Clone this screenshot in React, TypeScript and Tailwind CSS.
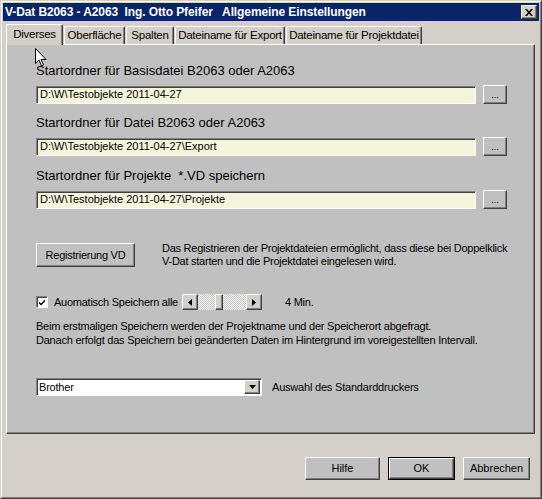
import React from "react";

const font = "font-['Liberation_Sans',Arial,sans-serif]";

// classic raised 3d button edge
const raised =
  "border border-t-white border-l-white border-r-[#404040] border-b-[#404040] shadow-[inset_-1px_-1px_0_#808080]";
const sunken =
  "border border-t-[#808080] border-l-[#808080] border-r-white border-b-white shadow-[inset_1px_1px_0_#404040]";

const PathRow = ({ value }: { value: string }) => (
  <div className="flex items-center gap-[7px]">
    <div className={`w-[440px] h-[18px] bg-[#f5f5dc] ${sunken} flex items-center pl-[3px] text-[11px] text-black whitespace-nowrap`}>
      {value}
    </div>
    <button className={`w-[24px] h-[19px] bg-[#c0c0c0] ${raised} flex items-end justify-center pb-[3px] text-[9px] leading-none text-black`}>
      ...
    </button>
  </div>
);

const Tab = ({ label, active, w }: { label: string; active?: boolean; w: string }) => (
  <div
    className={`${w} flex items-center justify-center whitespace-nowrap border-l border-t border-t-white border-l-white border-r border-r-[#404040] shadow-[inset_-1px_0_0_#808080] rounded-t-[2px] text-[11.5px] tracking-[-0.25px] text-black ${
      active ? "h-[21px] bg-[#d4d0c8] -mb-px z-10" : "h-[18px] bg-[#d4d0c8]"
    }`}
  >
    {label}
  </div>
);

const App = () => {
  return (
    <div className={`relative w-[542px] h-[499px] bg-[#d4d0c8] ${font} select-none`}>
      <div className="w-full h-full border border-t-[#d4d0c8] border-l-[#d4d0c8] border-r-[#404040] border-b-[#404040]">
        <div className="w-full h-full border border-t-white border-l-white border-r-[#808080] border-b-[#808080] p-px flex flex-col">
          {/* Title bar */}
          <div className="h-[18px] bg-[#0a246a] flex items-center justify-between pl-[2px] pr-[2px]">
            <span className="text-white font-bold text-[12px] tracking-[-0.1px] whitespace-pre">
              {"V-Dat B2063 - A2063  Ing. Otto Pfeifer   Allgemeine Einstellungen"}
            </span>
            <div className={`w-[16px] h-[14px] bg-[#d4d0c8] ${raised} flex items-center justify-center`}>
              <svg width="8" height="7" viewBox="0 0 8 7">
                <path d="M0 0h2l2 2.5L6 0h2L5 3.5 8 7H6L4 4.5 2 7H0l3-3.5z" fill="#000" />
              </svg>
            </div>
          </div>

          {/* Tabs */}
          <div className="flex items-end h-[23px] pl-[3px] gap-px">
            <Tab label="Diverses" active w="w-[57px]" />
            <Tab label="Oberfläche" w="w-[61px]" />
            <Tab label="Spalten" w="w-[48px]" />
            <Tab label="Dateiname für Export" w="w-[110px]" />
            <Tab label="Dateiname für Projektdatei" w="w-[136px]" />
          </div>

          {/* Tab panel */}
          <div className="ml-[3px] w-[529px] h-[390px] bg-[#c0c0c0] border border-t-white border-l-white border-r-[#404040] border-b-[#404040] shadow-[inset_-1px_-1px_0_#808080] pl-[29px] flex flex-col text-black">
            <div className="mt-[18px] text-[13px] leading-[16px]">Startordner für Basisdatei B2063 oder A2063</div>
            <div className="mt-[6px]">
              <PathRow value="D:\W\Testobjekte 2011-04-27" />
            </div>
            <div className="mt-[11px] text-[13px] leading-[16px]">Startordner für Datei B2063 oder A2063</div>
            <div className="mt-[6px]">
              <PathRow value="D:\W\Testobjekte 2011-04-27\Export" />
            </div>
            <div className="mt-[12px] text-[13px] leading-[16px] whitespace-pre">{"Startordner für Projekte  *.VD speichern"}</div>
            <div className="mt-[6px]">
              <PathRow value="D:\W\Testobjekte 2011-04-27\Projekte" />
            </div>

            <div className="mt-[33px] flex items-center text-[11px] tracking-[-0.25px]">
              <button className={`w-[99px] h-[24px] bg-[#c0c0c0] ${raised} text-black flex items-center justify-center`}>
                Registrierung VD
              </button>
              <div className="ml-[27px] leading-[13px]">
                <div>Das Registrieren der Projektdateien ermöglicht, dass diese bei Doppelklick</div>
                <div>V-Dat starten und die Projektdatei eingelesen wird.</div>
              </div>
            </div>

            <div className="mt-[26px] flex items-center h-[16px] text-[11px] tracking-[-0.25px]">
              <div className={`w-[12px] h-[12px] bg-white ${sunken} flex items-center justify-center`}>
                <svg width="8" height="8" viewBox="0 0 8 8">
                  <path d="M1 3.5l2 2L7 1.5v2L3 7.5 1 5.5z" fill="#000" />
                </svg>
              </div>
              <span className="ml-[6px]">Auomatisch Speichern alle</span>
              <div className="ml-[4px] w-[80px] h-[16px] flex bg-[repeating-conic-gradient(#ffffff_0_25%,#c0c0c0_0_50%)] bg-[length:2px_2px]">
                <div className={`w-[16px] h-[16px] bg-[#d4d0c8] ${raised} flex items-center justify-center`}>
                  <svg width="4" height="7" viewBox="0 0 4 7"><path d="M4 0v7L0 3.5z" fill="#000" /></svg>
                </div>
                <div className="w-[17px]" />
                <div className={`w-[8px] h-[16px] bg-[#d4d0c8] ${raised}`} />
                <div className="flex-1" />
                <div className={`w-[16px] h-[16px] bg-[#d4d0c8] ${raised} flex items-center justify-center`}>
                  <svg width="4" height="7" viewBox="0 0 4 7"><path d="M0 0v7l4-3.5z" fill="#000" /></svg>
                </div>
              </div>
              <span className="ml-[23px]">4 Min.</span>
            </div>

            <div className="mt-[9px] text-[11px] leading-[14px] tracking-[-0.22px]">
              <div>Beim erstmaligen Speichern werden der Projektname und der Speicherort abgefragt.</div>
              <div>Danach erfolgt das Speichern bei geänderten Daten im Hintergrund im voreigestellten Intervall.</div>
            </div>

            <div className="mt-[31px] flex items-center text-[11px] tracking-[-0.2px]">
              <div className={`w-[226px] h-[18px] bg-white ${sunken} flex items-center justify-between pl-[2px] pr-px`}>
                <span>Brother</span>
                <div className={`w-[16px] h-[14px] bg-[#d4d0c8] ${raised} flex items-center justify-center`}>
                  <svg width="7" height="4" viewBox="0 0 7 4"><path d="M0 0h7L3.5 4z" fill="#000" /></svg>
                </div>
              </div>
              <span className="ml-[10px]">Auswahl des Standarddruckers</span>
            </div>
          </div>

          {/* Bottom buttons */}
          <div className="flex justify-end items-start mt-[23px] pr-[9px] gap-[8px] text-[11px] text-black">
            <button className={`w-[75px] h-[23px] bg-[#c0c0c0] ${raised}`}>Hilfe</button>
            <div className="border border-black">
              <button className={`w-[65px] h-[21px] bg-[#c0c0c0] ${raised}`}>OK</button>
            </div>
            <button className={`w-[67px] h-[23px] bg-[#c0c0c0] ${raised}`}>Abbrechen</button>
          </div>
        </div>
      </div>

      {/* mouse pointer */}
      <svg className="absolute left-[35px] top-[48px]" width="12" height="19" viewBox="0 0 12 19">
        <path d="M0.5 0.5v15l3.5-3.5 2.5 6 2-1-2.5-5.5h5z" fill="#fff" stroke="#000" strokeWidth="1" />
      </svg>
    </div>
  );
};

export default App;
